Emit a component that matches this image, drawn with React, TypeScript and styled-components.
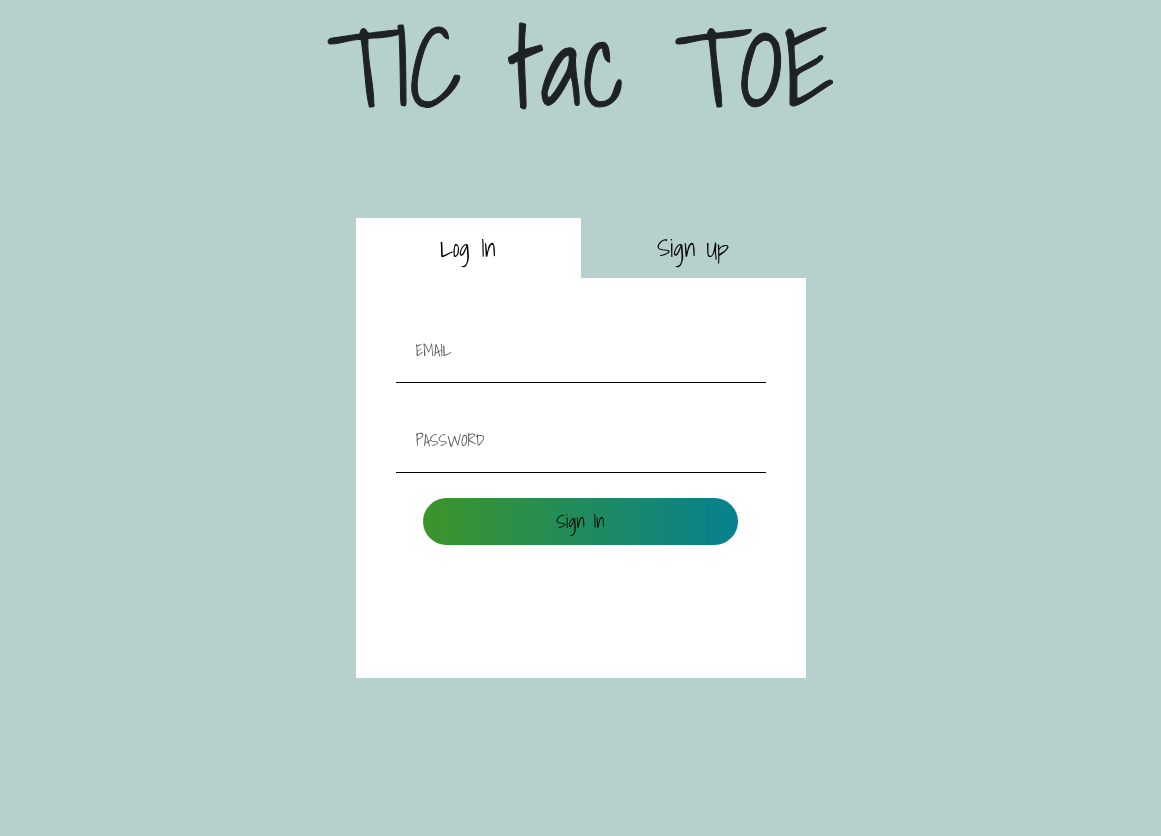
import React, { useState } from 'react';
import styled, { createGlobalStyle } from 'styled-components';

const GlobalStyle = createGlobalStyle`
  *, *::before, *::after {
    box-sizing: border-box;
  }

  body {
    margin: 0;
    background: #b6d0cd;
    color: #1e2226;
    font-family: 'Shadows Into Light', 'Liberation Sans Narrow', 'Lato', sans-serif;
  }

  button, input {
    font-family: inherit;
  }
`;

const Page = styled.main`
  display: flex;
  flex-direction: column;
  align-items: center;
  gap: 86px;
  min-height: 100vh;
  will-change: transform;
`;

const Title = styled.h1`
  margin: 0;
  color: #1e2225;
  font-size: 110px;
  font-weight: 400;
  line-height: 132px;
  text-align: center;
  -webkit-text-stroke: 1px currentColor;
`;

const Card = styled.section`
  width: 100%;
  max-width: 450px;
`;

const Tabs = styled.div`
  display: grid;
  grid-template-columns: 1fr 1fr;
`;

const Tab = styled.button<{ $active: boolean }>`
  height: 60px;
  padding: 0;
  border: 0;
  background: ${({ $active }) => ($active ? '#ffffff' : 'transparent')};
  color: #000000;
  font-size: 24px;
  line-height: 60px;
  cursor: pointer;
`;

const Form = styled.form`
  display: flex;
  flex-direction: column;
  align-items: center;
  gap: 25px;
  min-height: 400px;
  padding: 40px;
  background: #ffffff;
`;

const Field = styled.input`
  width: 100%;
  height: 65px;
  padding: 0 20px;
  border: 0;
  border-bottom: 1px solid #000000;
  outline: 0;
  background: transparent;
  color: #1e2226;
  font-size: 16px;

  &::placeholder {
    color: #505050;
    opacity: 1;
  }
`;

const Submit = styled.button`
  width: 85%;
  height: 47px;
  padding: 0;
  border: 0;
  border-radius: 24px;
  background: linear-gradient(to right, #3c952a, #06818f);
  color: #000000;
  font-size: 18px;
  cursor: pointer;
`;

type Mode = 'login' | 'signup';

export default function App() {
  const [mode, setMode] = useState<Mode>('login');

  return (
    <>
      <GlobalStyle />
      <Page>
        <Title>TIC tac TOE</Title>
        <Card>
          <Tabs role="tablist">
            <Tab
              type="button"
              role="tab"
              aria-selected={mode === 'login'}
              $active={mode === 'login'}
              onClick={() => setMode('login')}
            >
              Log In
            </Tab>
            <Tab
              type="button"
              role="tab"
              aria-selected={mode === 'signup'}
              $active={mode === 'signup'}
              onClick={() => setMode('signup')}
            >
              Sign Up
            </Tab>
          </Tabs>
          <Form onSubmit={(event) => event.preventDefault()}>
            <Field type="email" name="email" placeholder="EMAIL" aria-label="Email" />
            <Field type="password" name="password" placeholder="PASSWORD" aria-label="Password" />
            <Submit type="submit">{mode === 'login' ? 'Sign In' : 'Sign Up'}</Submit>
          </Form>
        </Card>
      </Page>
    </>
  );
}
